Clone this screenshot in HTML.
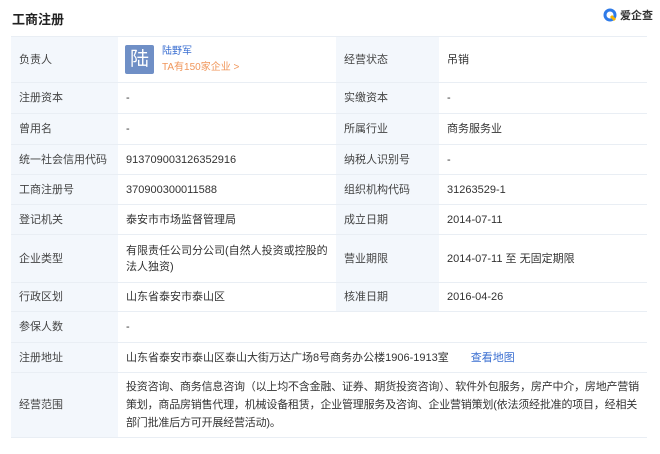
<!DOCTYPE html>
<html><head><meta charset="utf-8"><style>
body{margin:0;width:660px;height:454px;background:#fff;font-family:"Liberation Sans","Noto Sans CJK SC",sans-serif;color:#333;position:relative;overflow:hidden}
.title{position:absolute;left:12px;top:9px;font-size:13px;font-weight:bold;color:#222}
.logo{position:absolute;left:603px;top:7px;font-size:11px;font-weight:bold;color:#333;display:flex;align-items:center}
table{position:absolute;left:11px;top:36px;width:636px;border-collapse:collapse;font-size:11px}
td{border-top:1px solid #e9eef4;border-bottom:1px solid #e9eef4;padding:0 0 0 8px;vertical-align:middle;line-height:16px}
td.l{background:#f3f7fc;color:#444}
.av{display:inline-block;width:29px;height:29px;background:#6f8fc6;color:#fff;font-size:19px;text-align:center;line-height:29px;vertical-align:middle;border-radius:2px}
a{color:#3b6fd1;text-decoration:none}
</style></head><body>
<div class="title">工商注册</div>
<div class="logo"><svg width="14" height="14" viewBox="0 0 14 14"><circle cx="7" cy="7" r="5" fill="none" stroke="#2f7be8" stroke-width="3"/><path d="M8 8l4 4" stroke="#f5b400" stroke-width="3"/></svg>&nbsp;爱企查</div>
<table>
<colgroup><col style="width:107px"><col style="width:218px"><col style="width:103px"><col></colgroup>
<tr style="height:46px"><td class="l">负责人</td><td style="padding-left:7px"><span class="av">陆</span><span style="display:inline-block;vertical-align:middle;margin-left:8px;font-size:10px;line-height:16px"><a>陆野军</a><br><span style="color:#f0965a">TA有150家企业 &gt;</span></span></td><td class="l">经营状态</td><td>吊销</td></tr>
<tr style="height:31px"><td class="l">注册资本</td><td>-</td><td class="l">实缴资本</td><td>-</td></tr>
<tr style="height:31px"><td class="l">曾用名</td><td>-</td><td class="l">所属行业</td><td>商务服务业</td></tr>
<tr style="height:30px"><td class="l">统一社会信用代码</td><td>913709003126352916</td><td class="l">纳税人识别号</td><td>-</td></tr>
<tr style="height:30px"><td class="l">工商注册号</td><td>370900300011588</td><td class="l">组织机构代码</td><td>31263529-1</td></tr>
<tr style="height:30px"><td class="l">登记机关</td><td>泰安市市场监督管理局</td><td class="l">成立日期</td><td>2014-07-11</td></tr>
<tr style="height:48px"><td class="l">企业类型</td><td>有限责任公司分公司(自然人投资或控股的法人独资)</td><td class="l">营业期限</td><td>2014-07-11 至 无固定期限</td></tr>
<tr style="height:29px"><td class="l">行政区划</td><td>山东省泰安市泰山区</td><td class="l">核准日期</td><td>2016-04-26</td></tr>
<tr style="height:31px"><td class="l">参保人数</td><td colspan="3">-</td></tr>
<tr style="height:30px"><td class="l">注册地址</td><td colspan="3">山东省泰安市泰山区泰山大街万达广场8号商务办公楼1906-1913室<a style="margin-left:22px">查看地图</a></td></tr>
<tr style="height:65px"><td class="l">经营范围</td><td colspan="3" style="line-height:18px;padding-right:0"><span style="letter-spacing:-0.2px">投资咨询、商务信息咨询（以上均不含金融、证券、期货投资咨询）、软件外包服务，房产中介，房地产营销策划，商品房销售代理，机械设备租赁，企业管理服务及咨询、企业营销策划(依法须经批准的项目，经相关部门批准后方可开展经营活动)。</span></td></tr>
</table>
</body></html>
